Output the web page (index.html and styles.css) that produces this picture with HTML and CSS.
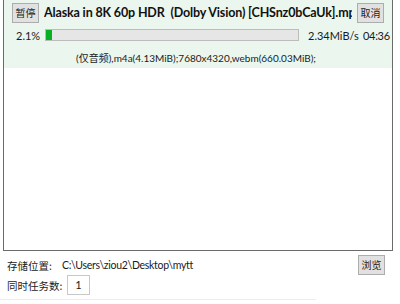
FILE: index.html
```html
<!DOCTYPE html>
<html>
<head>
<meta charset="utf-8">
<link rel="stylesheet" href="styles.css">
</head>
<body>
<div class="list">
  <div class="item">
    <div class="row1">
      <button class="btn">暂停</button>
      <div class="title">Alaska in 8K 60p HDR&nbsp; (Dolby Vision) [CHSnz0bCaUk].mp4</div>
      <button class="btn">取消</button>
    </div>
    <div class="row2">
      <span class="pct">2.1%</span>
      <div class="bar"><div class="fill" style="width:2.1%"></div></div>
      <span class="speed">2.34MiB/s</span>
      <span class="eta">04:36</span>
    </div>
    <div class="row3">(仅音频),m4a(4.13MiB);7680x4320,webm(660.03MiB);</div>
  </div>
</div>
<div class="settings">
  <div class="srow first">
    <span class="label">存储位置:</span>
    <span class="path">C:\Users\ziou2\Desktop\mytt</span>
    <button class="btn browse">浏览</button>
  </div>
  <div class="srow">
    <span class="label">同时任务数:</span>
    <span class="num">1</span>
  </div>
</div>
<div class="line"></div>
</body>
</html>
```
FILE: styles.css
```css
html, body {
  margin: 0;
  padding: 0;
  background: #ffffff;
}
body {
  width: 400px;
  height: 304px;
  overflow: hidden;
  font-family: Lato, "Noto Sans CJK SC", sans-serif;
  font-size: 11px;
  color: #1a1a1a;
  position: relative;
}
.list {
  margin-left: 3px;
  width: 388px;
  height: 250px;
  border: 1px solid #6a6a6a;
  border-top: none;
  background: #fff;
}
.item {
  background: #eaf6ee;
  height: 68px;
  box-sizing: border-box;
  padding-top: 3px;
}
.row1 {
  display: flex;
  align-items: center;
  padding: 0 8px;
  height: 20px;
}
.btn {
  font-family: "Noto Sans CJK SC", sans-serif;
  font-size: 10px;
  width: 27px;
  height: 20px;
  padding: 0;
  background: #e1e1e1;
  border: 1px solid #adadad;
  color: #222;
  flex: none;
  line-height: 16px;
}
.title {
  flex: 1;
  min-width: 0;
  margin: 0 5px 0 5px;
  font-weight: bold;
  font-size: 12.5px;
  letter-spacing: -0.15px;
  white-space: nowrap;
  overflow: hidden;
  color: #111;
  line-height: 20px;
}
.row2 {
  display: flex;
  align-items: center;
  margin-top: 5px;
  height: 14px;
  padding-left: 12px;
}
.pct {
  flex: none;
  width: 29px;
}
.bar {
  flex: none;
  box-sizing: border-box;
  width: 254px;
  height: 12px;
  background: #e6e6e6;
  border: 1px solid #bcbcbc;
}
.fill {
  height: 100%;
  background: #06b025;
  min-width: 6px;
}
.speed {
  flex: none;
  margin-left: 9px;
  width: 55px;
  white-space: nowrap;
}
.eta {
  flex: none;
  white-space: nowrap;
  letter-spacing: -0.3px;
}
.row3 {
  text-align: center;
  margin-top: 8px;
  padding-right: 4px;
  font-size: 10px;
  white-space: nowrap;
}
.settings {
  padding: 4px 7px 0 7px;
}
.srow {
  display: flex;
  align-items: center;
  height: 20px;
  white-space: nowrap;
}
.label {
  flex: none;
  font-family: "Noto Sans CJK SC", sans-serif;
  font-size: 10.5px;
  width: 55px;
  color: #222;
}
.path {
  flex: 1;
  font-size: 10.5px;
  letter-spacing: -0.3px;
}
.browse {
  margin-right: 8px;
}
.num {
  flex: none;
  margin-left: 5px;
  box-sizing: border-box;
  width: 23px;
  height: 20px;
  border: 1px solid #c8c8c8;
  text-align: center;
  line-height: 18px;
}
.line {
  position: absolute;
  left: 0;
  top: 299px;
  width: 316px;
  height: 1px;
  background: #ececec;
}
```
